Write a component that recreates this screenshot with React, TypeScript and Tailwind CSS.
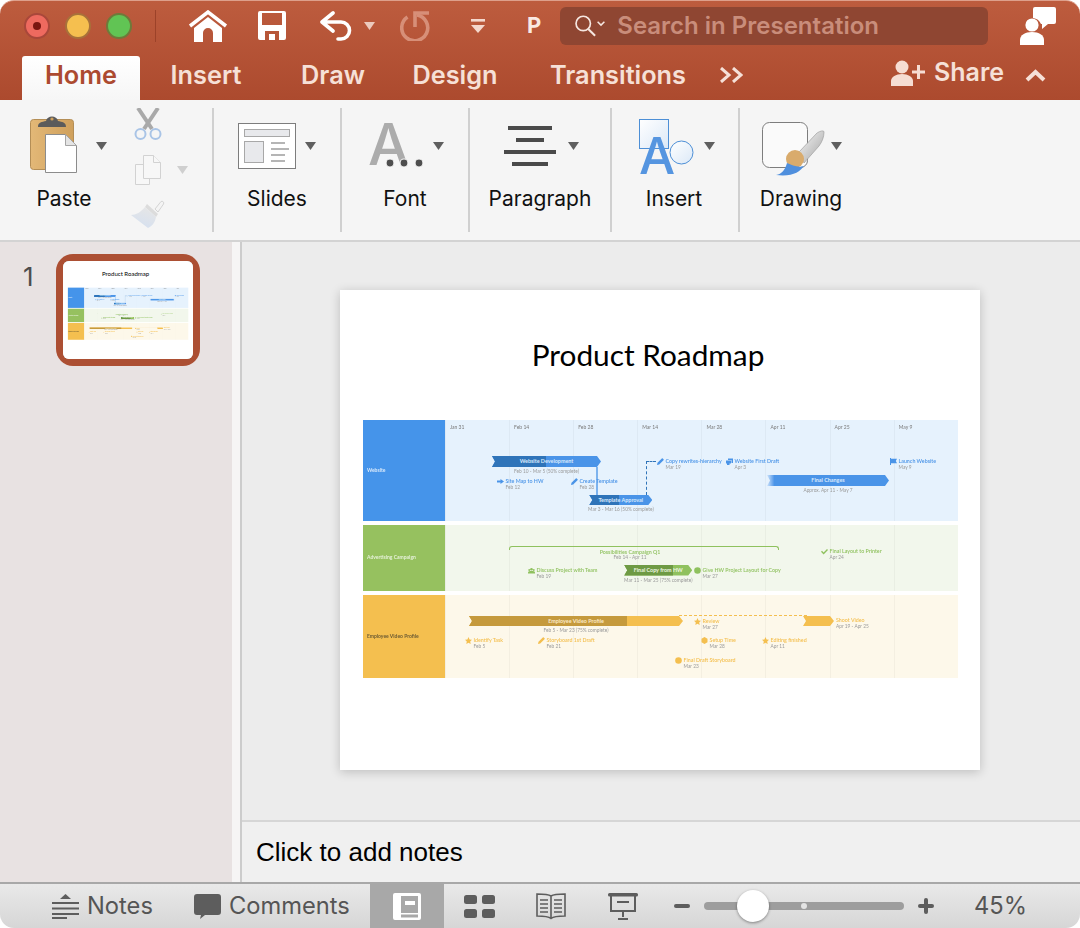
import React from "react";

const Caret = ({ c = "#5f5f5f" }: { c?: string }) => (
  <svg width="11" height="8" viewBox="0 0 11 8" className="shrink-0"><path d="M0 0H11L5.5 8Z" fill={c} /></svg>
);

/* ---------- title bar icons ---------- */
const HomeIcon = () => (
  <svg width="40" height="32" viewBox="0 0 40 32" fill="none">
    <path d="M2 16 20 2l18 14" stroke="#fff" strokeWidth="3.5" />
    <path d="M6 18 20 7l14 11v14H25V23a5 5 0 0 0-10 0v9H6Z" fill="#fff" />
  </svg>
);
const SaveIcon = () => (
  <svg width="28" height="29" viewBox="0 0 28 29"><path fillRule="evenodd" fill="#fff" d="M2 0h24a2 2 0 0 1 2 2v25a2 2 0 0 1-2 2H2a2 2 0 0 1-2-2V2a2 2 0 0 1 2-2ZM4 2v12h20V2ZM7 20v9h14v-9ZM11 23h6v6h-6Z" /></svg>
);
const UndoIcon = () => (
  <svg width="32" height="30" viewBox="0 0 32 30" fill="none" stroke="#fff" strokeWidth="3.6" strokeLinecap="round" strokeLinejoin="round">
    <path d="M13 2 2 11l11 9M3 11h18a8.5 8.5 0 0 1 0 17h-3" />
  </svg>
);
const RedoIcon = () => (
  <svg width="30" height="31" viewBox="0 0 30 31" fill="none" stroke="#d78f78" strokeWidth="3.6">
    <path d="M7.500 7A13 13 0 1 0 17 5" />
    <path d="M15 17V3h14" />
  </svg>
);
const QatIcon = () => (
  <svg width="14" height="14" viewBox="0 0 14 14" fill="#f4d8cd"><rect y="0" width="14" height="2.6" /><path d="M0 6h14l-7 8Z" /></svg>
);
const SearchIcon = () => (
  <svg width="36" height="22" viewBox="0 0 36 26" fill="none" stroke="#f6e7e1">
    <circle cx="10" cy="10" r="8.5" strokeWidth="2" />
    <path d="m16 16.5 8 8" strokeWidth="2.4" />
    <path d="m27 8 4 4 4-4" strokeWidth="1.8" />
  </svg>
);
const PersonChat = () => (
  <svg width="36" height="38" viewBox="0 0 36 38" fill="#fff">
    <path d="M13 2a2 2 0 0 1 2-2h19a2 2 0 0 1 2 2v13a2 2 0 0 1-2 2h-6l-6 5v-5h-1a10 10 0 0 0-8-6Z" />
    <circle cx="12" cy="18" r="6.6" />
    <path d="M0 38v-5c0-5 5-8 12-8s12 3 12 8v5Z" />
  </svg>
);
const ShareIcon = () => (
  <svg width="34" height="26" viewBox="0 0 34 26" fill="#f6ddd3">
    <circle cx="11" cy="7" r="6.5" />
    <path d="M0 26v-5c0-4 5-7 11-7s11 3 11 7v5Z" />
    <path d="M21 10.5h13v3H21Z" /><path d="M26 5h3v14h-3Z" />
  </svg>
);

/* ---------- ribbon icons ---------- */
const PasteIcon = () => (
  <svg width="47" height="60" viewBox="0 0 47 60">
    <defs>
      <linearGradient id="tan" x1="0" x2="1"><stop offset="0" stopColor="#e3b877" /><stop offset="1" stopColor="#cfa05c" /></linearGradient>
    </defs>
    <rect x=".5" y="6.5" width="43" height="50" rx="3" fill="url(#tan)" stroke="#b48e56" />
    <path d="M8 14c0-5 4-5 8-6 1-6 11-6 12 0 4 1 8 1 8 6Z" fill="#5b5b5b" />
    <circle cx="22" cy="6" r="1.6" fill="#cfa05c" />
    <path d="M15.5 21.5h20l11 11v27h-31Z" fill="#fff" stroke="#8c8c8c" />
    <path d="M35.5 21.5v11h11Z" fill="#e4e4e4" stroke="#a5a5a5" />
  </svg>
);
const ScissorsIcon = () => (
  <svg width="28" height="32" viewBox="0 0 28 32" fill="none">
    <path d="M4 0 18 21M24 0 10 21" stroke="#a9a9a9" strokeWidth="4" />
    <circle cx="6.5" cy="26" r="5" stroke="#a9c4e6" strokeWidth="2" />
    <circle cx="21.5" cy="26" r="5" stroke="#a9c4e6" strokeWidth="2" />
  </svg>
);
const CopyIcon = () => (
  <svg width="26" height="30" viewBox="0 0 26 30" fill="#f7f7f7" stroke="#d2d2d2">
    <path d="M.5 9.5h14v20H.5Z" />
    <path d="M8.5.5h10l7 7v16h-17Z" />
    <path d="M18.5.5v7h7" />
  </svg>
);
const BrushFaded = () => (
  <svg width="34" height="29" viewBox="0 0 34 29">
    <defs>
      <linearGradient id="fb" x1="0.7" y1="0" x2="0.3" y2="1"><stop offset="0" stopColor="#e6e6e6" /><stop offset="1" stopColor="#d5e0f0" /></linearGradient>
    </defs>
    <path d="M24 9 30 1.5c1.500-1 3.500 1 2.500 2.500L27 12Z" fill="#f4f4f4" stroke="#d4d4d4" />
    <path d="M16 4 27 14l-2 3-11-10Z" fill="#dcdcdc" />
    <path d="M14 7 25 17c-1 6-4 9-8 11L0 15c5 0 10-3 14-8Z" fill="url(#fb)" />
  </svg>
);
const SlidesIcon = () => (
  <svg width="58" height="46" viewBox="0 0 58 46">
    <rect x=".5" y=".5" width="57" height="45" fill="#fff" stroke="#7d7d7d" />
    <rect x="6.500" y="6.500" width="45" height="7" fill="#e8e9ec" stroke="#a8a8a8" />
    <rect x="6.500" y="18.500" width="19" height="21" fill="#e8e9ec" stroke="#a8a8a8" />
    <path d="M33 20h14M33 26h18M33 32h14M33 38h14" stroke="#b5b5b5" strokeWidth="2" />
  </svg>
);
const FontIcon = () => (
  <svg width="56" height="46" viewBox="0 0 56 46" className="overflow-visible">
    <text x="0" y="42" fontFamily="Inter,sans-serif" fontWeight="500" fontSize="58" fill="#acacac">A</text>
    <circle cx="22" cy="40" r="4" fill="#4e4e4e" stroke="#f5f5f5" strokeWidth="1.200" />
    <circle cx="36" cy="40" r="4" fill="#4e4e4e" stroke="#f5f5f5" strokeWidth="1.200" />
    <circle cx="51" cy="40" r="4" fill="#4e4e4e" stroke="#f5f5f5" strokeWidth="1.200" />
  </svg>
);
const ParagraphIcon = () => (
  <svg width="52" height="40" viewBox="0 0 52 40" fill="#4a4a4a">
    <rect x="4" width="44" height="4" /><rect x="12" y="12" width="28" height="4" /><rect y="24" width="52" height="4" /><rect x="8" y="36" width="36" height="4" />
  </svg>
);
const InsertIcon = () => (
  <svg width="54" height="55" viewBox="0 0 54 55" className="overflow-visible">
    <defs>
      <linearGradient id="sq" x1="0" y1="0" x2="1" y2="1"><stop offset="0" stopColor="#fff" /><stop offset="1" stopColor="#dbe8f7" /></linearGradient>
    </defs>
    <rect x=".5" y=".5" width="29" height="29" fill="url(#sq)" stroke="#4d8fd6" />
    <circle cx="42.500" cy="33.500" r="11.500" fill="url(#sq)" stroke="#4d8fd6" />
    <text x="0" y="55" fontFamily="Inter,sans-serif" fontWeight="500" fontSize="51" fill="#5595e0">A</text>
  </svg>
);
const DrawingIcon = () => (
  <svg width="63" height="54" viewBox="0 0 63 54">
    <defs>
      <linearGradient id="hd" x1="0" y1="0" x2="1" y2="1"><stop offset="0" stopColor="#f8f8f8" /><stop offset="1" stopColor="#a3a3a3" /></linearGradient>
    </defs>
    <rect x=".5" y=".5" width="45" height="45" rx="7" fill="#fafafa" stroke="#7d7d7d" />
    <path d="M37 30 55 11c3-2 7-3 7-1 0 5-2 10-5 14L42 41Z" fill="url(#hd)" stroke="#9f9f9f" strokeWidth=".7" />
    <circle cx="33" cy="37" r="9" fill="#d9ab6c" />
    <path d="M14 53c6-1 9-5 11-12 5 2 11 5 17 3-4 6-12 11-28 9Z" fill="#4f8fdd" />
  </svg>
);

/* ---------- status icons ---------- */
const NotesIcon = () => (
  <svg width="27" height="25" viewBox="0 0 27 25" fill="#5d5d5d">
    <path d="M13.500 0 19 5H8Z" /><rect y="8" width="27" height="2" /><rect y="13.500" width="27" height="2" /><rect y="19" width="27" height="2" /><rect y="23" width="15" height="2" />
  </svg>
);
const CommentIcon = () => (
  <svg width="27" height="25" viewBox="0 0 27 25"><path d="M3 0h21a3 3 0 0 1 3 3v15a3 3 0 0 1-3 3H11l-5 4 1-4H3a3 3 0 0 1-3-3V3a3 3 0 0 1 3-3Z" fill="#5d5d5d" /></svg>
);
const NormalView = () => (
  <svg width="28" height="27" viewBox="0 0 28 27"><path fillRule="evenodd" fill="#fff" d="M2 0h24a2 2 0 0 1 2 2v23a2 2 0 0 1-2 2H2a2 2 0 0 1-2-2V2a2 2 0 0 1 2-2ZM8 3v17h17V3ZM8 21.500v3h17v-3ZM12 8h10v4H12Z" /></svg>
);
const GridView = () => (
  <svg width="31" height="23" viewBox="0 0 31 23" fill="#5d5d5d">
    <rect width="13" height="9" rx="2.500" /><rect x="18" width="13" height="9" rx="2.500" /><rect y="14" width="13" height="9" rx="2.500" /><rect x="18" y="14" width="13" height="9" rx="2.500" />
  </svg>
);
const BookView = () => (
  <svg width="30" height="27" viewBox="0 0 30 27" fill="none" stroke="#5d5d5d" strokeWidth="1.600">
    <path d="M15 3C12 1 5 1 1 1v22c5 0 11 0 14 2.500C18 23 25 23 29 23V1c-4 0-11 0-14 2Zm0 0v23" />
    <path d="M4 7h8M4 11h8M4 15h8M4 19h8M18 7h8M18 11h8M18 15h8M18 19h8" strokeWidth="1.400" />
  </svg>
);
const PresentView = () => (
  <svg width="30" height="27" viewBox="0 0 30 27" fill="none" stroke="#5d5d5d" strokeWidth="2">
    <rect y="0" width="30" height="3.500" rx="1.500" fill="#5d5d5d" stroke="none" />
    <path d="M3 3v15h24V3M9 9h12M15 18v6M10 26h10" />
  </svg>
);

/* ---------- chart icons ---------- */
const I = ({ children }: { children: React.ReactNode }) => (
  <svg width="7" height="7" viewBox="0 0 7 7" fill="currentColor" className="shrink-0">{children}</svg>
);
const Arrow = () => <I><path d="M0 2.600h3.500V1L7 3.500 3.500 6V4.400H0Z" /></I>;
const Pencil = () => <I><path d="M0 7 .5 4.800 4.800.5a.7.7 0 0 1 1 0l.7.7a.7.7 0 0 1 0 1L2.200 6.500Z" /></I>;
const Draft = () => <I><path d="M2 .5h5v4.500H5.500V2H2ZM0 2.500h5v3H3.500V7H1V5.500H0Z" /></I>;
const Flag = () => <I><path d="M0 0h1v7H0ZM1 .8h6L5.800 3 7 5.200H1Z" /></I>;
const People = () => <I><circle cx="3.500" cy="2.200" r="1.300" /><circle cx="1.200" cy="3" r=".9" /><circle cx="5.800" cy="3" r=".9" /><path d="M0 5.500c0-1 1-1.500 3.500-1.500S7 4.500 7 5.500V6.500H0Z" /></I>;
const Dot = () => <I><circle cx="3.500" cy="3.500" r="3.300" /></I>;
const Check = () => <I><path d="M0 3.800 1 2.800l1.600 1.700L6 1l1 1-4.400 4.500Z" /></I>;
const Star = () => <I><path d="M3.500 0 4.600 2.400 7 2.700 5.200 4.400 5.700 7 3.500 5.700 1.300 7l.5-2.600L0 2.700l2.400-.3Z" /></I>;
const Hex = () => <I><path d="M3.500 0 6.500 1.700V5.300L3.500 7 .5 5.300V1.700Z" /></I>;

const Milestone = ({ pos, icon, title, sub, tone }: { pos: string; icon?: React.ReactNode; title: string; sub: string; tone: string }) => (
  <div className={`absolute flex gap-[1.5px] whitespace-nowrap ${pos} ${tone}`}>
    {icon}
    <div className="flex flex-col leading-[6px]">
      <span className="text-[5.300px] font-semibold leading-[6px]">{title}</span>
      <span className="text-[4.800px] leading-[6px] text-[#9a9a9a]">{sub}</span>
    </div>
  </div>
);

const notch = "[clip-path:polygon(0_0,calc(100%-4px)_0,100%_50%,calc(100%-4px)_100%,0_100%,3px_50%)]";
const Bar = ({ pos, size, light, dark, label, sub, labelColor = "text-white" }: { pos: string; size: string; light: string; dark?: React.ReactNode; label?: string; sub?: string; labelColor?: string }) => (
  <div className={`absolute flex flex-col items-center whitespace-nowrap ${pos}`}>
    <div className={`relative flex ${size} ${light} ${notch}`}>
      {dark}
      {label && <span className={`absolute inset-0 flex items-center justify-center text-[5.400px] font-bold ${labelColor}`}>{label}</span>}
    </div>
    {sub && <span className="mt-px text-[4.800px] leading-[6px] text-[#9a9a9a]">{sub}</span>}
  </div>
);

const Columns = ({ dates }: { dates?: string[] }) => (
  <div className="absolute inset-0 flex">
    {Array.from({ length: 8 }).map((_, i) => (
      <div key={i} className="h-full w-[64.100px] border-l border-black/[0.035] pl-1 pt-1 text-[5px] leading-[6px] text-[#7a7a7a]">
        {dates?.[i]}
      </div>
    ))}
  </div>
);

const Slide = () => (
  <div className="h-[480px] w-[640px] bg-white font-[Lato,sans-serif]">
    <div className="w-[616px] pt-[45px] text-center text-[29.800px] leading-[40px] text-black">Product Roadmap</div>
    <div className="ml-[23px] mt-[45px] flex w-[595px] flex-col gap-1 blur-[0.4px]">
      {/* Website */}
      <div className="flex h-[101px]">
        <div className="flex w-[82px] items-center bg-[#4594ea] pl-1 text-[5px] font-bold text-[#d8e9fb]">Website</div>
        <div className="relative w-[513px] bg-[#e6f2fd] text-[#4a94e8]">
          <Columns dates={["Jan 31", "Feb 14", "Feb 28", "Mar 14", "Mar 28", "Apr 11", "Apr 25", "May 9"]} />
          <Bar pos="left-[47px] top-[36px]" size="h-[11px] w-[109px]" light="bg-[#4a94e8]" dark={<div className="h-full w-[54px] bg-[#2f74b9]" />} label="Website Development" labelColor="text-[#d9eafc]" sub="Feb 10 - Mar 5 (50% complete)" />
          <div className="absolute left-[151px] top-[47px] h-[28px] w-[1.500px] bg-[#7db3ee]" />
          <Bar pos="left-[143px] top-[75px]" size="h-[10px] w-[63px]" light="bg-[#4a94e8]" dark={<div className="h-full w-[30px] bg-[#2f74b9]" />} label="Template Approval" labelColor="text-[#d9eafc]" sub="Mar 3 - Mar 16 (50% complete)" />
          <div className="absolute left-[201px] top-[41px] h-[34px] border-l border-dashed border-[#2f74b9]" />
          <div className="absolute left-[201px] top-[41px] w-[10px] border-t border-dashed border-[#2f74b9]" />
          <Milestone pos="left-[52px] top-[58px]" icon={<Arrow />} title="Site Map to HW" sub="Feb 12" tone="text-[#4a94e8]" />
          <Milestone pos="left-[126px] top-[58px]" icon={<Pencil />} title="Create Template" sub="Feb 28" tone="text-[#4a94e8]" />
          <Milestone pos="left-[212px] top-[38px]" icon={<Pencil />} title="Copy rewrites-hierarchy" sub="Mar 19" tone="text-[#4a94e8]" />
          <Milestone pos="left-[281px] top-[38px]" icon={<Draft />} title="Website First Draft" sub="Apr 3" tone="text-[#4a94e8]" />
          <Milestone pos="left-[445px] top-[38px]" icon={<Flag />} title="Launch Website" sub="May 9" tone="text-[#4a94e8]" />
          <Bar pos="left-[322px] top-[55px]" size="h-[11px] w-[122px]" light="bg-gradient-to-r from-[#cfe4fa] to-[#4a94e8] to-[6%]" label="Final Changes" labelColor="text-[#d9eafc]" sub="Approx. Apr 11 - May 7" />
        </div>
      </div>
      {/* Advertising */}
      <div className="flex h-[66px]">
        <div className="flex w-[82px] items-center bg-[#96c15f] pl-1 text-[5px] font-bold text-[#e6f1d8]">Advertising Campaign</div>
        <div className="relative w-[513px] bg-[#f2f7ec] text-[#8fc15e]">
          <Columns />
          <div className="absolute left-[64px] top-[21px] h-[3.500px] w-[270px] rounded-t-[3px] border-x border-t-[1.500px] border-[#8fc15e]" />
          <div className="absolute left-[135px] top-[24px] flex w-[100px] flex-col items-center whitespace-nowrap">
            <span className="text-[5.300px] font-semibold leading-[6px]">Possibilities Campaign Q1</span>
            <span className="text-[4.800px] leading-[5px] text-[#9a9a9a]">Feb 14 - Apr 11</span>
          </div>
          <Milestone pos="left-[83px] top-[42px]" icon={<People />} title="Discuss Project with Team" sub="Feb 19" tone="text-[#8fc15e]" />
          <Bar pos="left-[179px] top-[40px]" size="h-[10.500px] w-[68px]" light="bg-[#8fc15e]" dark={<div className="h-full w-[49px] bg-[#6e9a44]" />} label="Final Copy from HW" labelColor="text-[#eef6e2]" sub="Mar 11 - Mar 25 (75% complete)" />
          <Milestone pos="left-[249px] top-[42px]" icon={<Dot />} title="Give HW Project Layout for Copy" sub="Mar 27" tone="text-[#8fc15e]" />
          <Milestone pos="left-[376px] top-[23px]" icon={<Check />} title="Final Layout to Printer" sub="Apr 24" tone="text-[#8fc15e]" />
        </div>
      </div>
      {/* Employee */}
      <div className="flex h-[83px]">
        <div className="flex w-[82px] items-center bg-[#f4bf4f] pl-1 text-[5px] font-bold text-[#6b5a33]">Employee Video Profile</div>
        <div className="relative w-[513px] bg-[#fdf8ea] text-[#f4bf4f]">
          <Columns />
          <Bar pos="left-[24px] top-[21px]" size="h-[10px] w-[214px]" light="bg-[#f4bf4f]" dark={<div className="h-full w-[158px] bg-[#c59a3d]" />} label="Employee Video Profile" labelColor="text-[#fbeac8]" sub="Feb 5 - Mar 23 (75% complete)" />
          <div className="absolute left-[234px] top-[20px] w-[128px] border-t border-dashed border-[#f4bf4f]" />
          <Bar pos="left-[358px] top-[21px]" size="h-[10px] w-[31px]" light="bg-[#f4bf4f]" />
          <Milestone pos="left-[391px] top-[22px]" title="Shoot Video" sub="Apr 19 - Apr 25" tone="text-[#f4bf4f]" />
          <Milestone pos="left-[20px] top-[42px]" icon={<Star />} title="Identify Task" sub="Feb 5" tone="text-[#f4bf4f]" />
          <Milestone pos="left-[93px] top-[42px]" icon={<Pencil />} title="Storyboard 1st Draft" sub="Feb 21" tone="text-[#f4bf4f]" />
          <Milestone pos="left-[249px] top-[23px]" icon={<Star />} title="Review" sub="Mar 27" tone="text-[#f4bf4f]" />
          <Milestone pos="left-[256px] top-[42px]" icon={<Hex />} title="Setup Time" sub="Mar 28" tone="text-[#f4bf4f]" />
          <Milestone pos="left-[317px] top-[42px]" icon={<Star />} title="Editing finished" sub="Apr 11" tone="text-[#f4bf4f]" />
          <Milestone pos="left-[230px] top-[61.500px]" icon={<Dot />} title="Final Draft Storyboard" sub="Mar 23" tone="text-[#f4bf4f]" />
        </div>
      </div>
    </div>
  </div>
);

const Sep = () => <div className="h-[124px] w-[2px] shrink-0 self-center bg-[#d0d0d0]" />;

const Group = ({ w, icon, label, shift = "" }: { w: string; icon: React.ReactNode; label: string; shift?: string }) => (
  <div className={`flex shrink-0 flex-col items-center ${w}`}>
    <div className={`flex h-[87px] items-center justify-center gap-[9px] pt-[5px] ${shift}`}>
      {icon}
      <Caret />
    </div>
    <div className="text-[21px] leading-6 text-[#111]">{label}</div>
  </div>
);

export default function App() {
  return (
    <div className="h-[928px] w-[1080px] overflow-hidden bg-white font-[Inter,sans-serif]">
      {/* Title + tabs */}
      <div className="h-[100px] rounded-t-[14px] border-t border-[#dd9f8b] bg-gradient-to-b from-[#bd5c3e] to-[#ac4a2e]">
        <div className="flex h-[55px] items-center pb-[6px]">
          <div className="ml-6 flex gap-[15px]">
            <div className="flex h-[26px] w-[26px] items-center justify-center rounded-full border-2 border-[#a9473a] bg-[#ee6a5f]"><div className="h-2 w-2 rounded-full bg-[#7a1610]" /></div>
            <div className="h-[26px] w-[26px] rounded-full border-2 border-[#a8713a] bg-[#f5bf4f]" />
            <div className="h-[26px] w-[26px] rounded-full border-2 border-[#6e7a3a] bg-[#61c454]" />
          </div>
          <div className="ml-[23px] h-8 w-px bg-[#9c4229]" />
          <div className="ml-8"><HomeIcon /></div>
          <div className="ml-[30px]"><SaveIcon /></div>
          <div className="ml-[34px]"><UndoIcon /></div>
          <div className="ml-[12px]"><Caret c="#eccabd" /></div>
          <div className="ml-[25px]"><RedoIcon /></div>
          <div className="ml-[41px]"><QatIcon /></div>
          <div className="ml-[42px] text-[22px] font-bold text-[#f9e9e3]">P</div>
          <div className="ml-[19px] flex h-[38px] w-[428px] items-center rounded-md bg-[#8f4632] pl-3">
            <SearchIcon />
            <span className="ml-[9px] text-[24px] font-semibold text-[#c98d7b]">Search in Presentation</span>
          </div>
          <div className="ml-[32px]"><PersonChat /></div>
        </div>
        <div className="flex h-11 items-stretch text-[25.300px] font-semibold text-[#f6e0d7]">
          <div className="ml-[22px] flex w-[118px] items-center justify-center rounded-t-[3px] bg-gradient-to-b from-white to-[#f6f6f6] pb-[6px] text-[#ac4a30]">Home</div>
          <div className="flex w-[132px] items-center justify-center pb-[6px]">Insert</div>
          <div className="flex w-[122px] items-center justify-center pb-[6px]">Draw</div>
          <div className="flex w-[122px] items-center justify-center pb-[6px]">Design</div>
          <div className="flex w-[204px] items-center justify-center pb-[6px]">Transitions</div>
          <div className="flex items-center pb-[6px]">
            <svg width="23" height="16" viewBox="0 0 23 16" fill="none" stroke="#f6e0d7" strokeWidth="3"><path d="m1 1 8 7-8 7M13 1l8 7-8 7" /></svg>
          </div>
          <div className="ml-[148px] flex items-center gap-[9px] pb-[11px]">
            <ShareIcon />
            <span className="text-[25px]">Share</span>
          </div>
          <div className="ml-[21px] flex items-center pb-[6px]">
            <svg width="21" height="13" viewBox="0 0 21 13" fill="none" stroke="#f6e0d7" strokeWidth="4"><path d="m2 11 8.500-8 8.500 8" /></svg>
          </div>
        </div>
      </div>

      {/* Ribbon */}
      <div className="flex h-[140px] bg-[#f5f5f5]">
        <div className="flex w-[212px] shrink-0">
          <Group w="w-[128px]" icon={<div className="mb-[6px] mr-[10px]"><PasteIcon /></div>} label="Paste" shift="ml-2" />
          <div className="flex flex-col items-start gap-[15px] pl-[5px] pt-2">
            <div className="pl-[1px]"><ScissorsIcon /></div>
            <div className="flex items-center gap-4 pl-[2px]"><CopyIcon /><Caret c="#cfcfcf" /></div>
            <div className="-ml-[2px]"><BrushFaded /></div>
          </div>
        </div>
        <Sep />
        <Group w="w-[126px]" icon={<SlidesIcon />} label="Slides" />
        <Sep />
        <Group w="w-[126px]" icon={<FontIcon />} label="Font" shift="ml-[2px]" />
        <Sep />
        <Group w="w-[140px]" icon={<div className="mr-[3px]"><ParagraphIcon /></div>} label="Paragraph" shift="ml-[2px]" />
        <Sep />
        <Group w="w-[126px] pr-[2px]" icon={<div className="mr-[2px]"><InsertIcon /></div>} label="Insert" shift="ml-[5px]" />
        <Sep />
        <Group w="w-[122px]" icon={<div className="-mr-[3px] mt-[6px]"><DrawingIcon /></div>} label="Drawing" shift="ml-[2px]" />
      </div>
      <div className="h-[2px] bg-[#d3d3d3]" />

      {/* Body */}
      <div className="flex h-[640px]">
        <div className="flex w-[232px] shrink-0 items-start gap-[22px] bg-[#e8e2e2] pl-[23px] pt-3">
          <div className="pt-[7px] text-[26px] leading-8 text-[#4d4d4d]">1</div>
          <div className="rounded-[17px] bg-[#ac4f33] p-[7px]">
            <div className="h-[98px] w-[130px] overflow-hidden rounded-[6px] bg-white shadow-[inset_0_0_2px_#777]">
              <div className="origin-top-left scale-[0.203]"><Slide /></div>
            </div>
          </div>
        </div>
        <div className="w-2 shrink-0 bg-[#f6f5f5]" />
        <div className="w-[2px] shrink-0 bg-[#cccccc]" />
        <div className="flex flex-1 flex-col">
          <div className="flex h-[578px] items-center justify-center bg-[#ececec] pb-[2px] pr-[2px]">
            <div className="shadow-[0_2px_10px_rgba(0,0,0,0.2)]"><Slide /></div>
          </div>
          <div className="h-[2px] bg-[#d6d6d6]" />
          <div className="flex flex-1 items-center bg-[#f0f0f0] pl-[14px] font-['Liberation_Sans',sans-serif] text-[26px] text-black">Click to add notes</div>
        </div>
      </div>

      {/* Status bar */}
      <div className="flex h-[46px] items-center rounded-b-[14px] border-t-2 border-[#a8a8a8] bg-gradient-to-b from-[#e9e9e9] to-[#d6d6d6] text-[24px] text-[#555]">
        <div className="ml-[52px]"><NotesIcon /></div>
        <span className="ml-2 w-[65px] whitespace-nowrap text-[23.700px]">Notes</span>
        <div className="ml-[42px]"><CommentIcon /></div>
        <span className="ml-2 w-[121px] whitespace-nowrap text-[23.700px]">Comments</span>
        <div className="ml-5 flex w-[74px] items-center justify-center self-stretch bg-[#a8a8a8]"><NormalView /></div>
        <div className="ml-5"><GridView /></div>
        <div className="ml-[41px]"><BookView /></div>
        <div className="ml-[42px]"><PresentView /></div>
        <div className="ml-9 h-[4px] w-4 rounded-sm bg-[#5d5d5d]" />
        <div className="relative ml-[14px] flex h-2 w-[200px] items-center rounded-full bg-[#9d9d9d]">
          <div className="absolute left-[97px] h-[6px] w-[6px] rounded-full bg-[#e4e4e4]" />
          <div className="absolute left-[33px] h-8 w-8 rounded-full bg-white shadow-[0_1px_3px_rgba(0,0,0,0.4)]" />
        </div>
        <div className="relative ml-[14px] flex h-4 w-4 items-center justify-center">
          <div className="h-[4px] w-4 rounded-sm bg-[#5d5d5d]" />
          <div className="absolute h-4 w-[4px] rounded-sm bg-[#5d5d5d]" />
        </div>
        <span className="ml-10 text-[23.700px]">45%</span>
      </div>
    </div>
  );
}
